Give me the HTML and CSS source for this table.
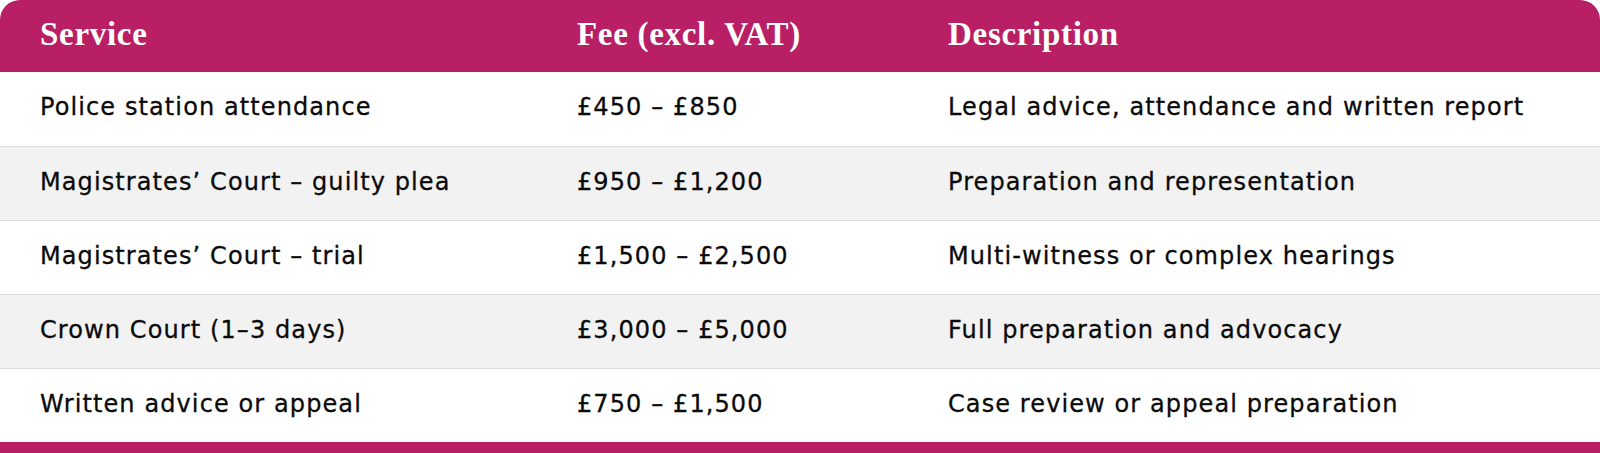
FILE: index.html
```html
<!DOCTYPE html>
<html lang="en">
<head>
<meta charset="utf-8">
<title>Fees</title>
<link rel="stylesheet" href="styles.css">
</head>
<body>
<div class="fees">
  <table class="fee-table">
    <colgroup>
      <col class="col-service">
      <col class="col-fee">
      <col class="col-desc">
    </colgroup>
    <thead>
      <tr>
        <th>Service</th>
        <th>Fee (excl. VAT)</th>
        <th>Description</th>
      </tr>
    </thead>
    <tbody>
      <tr>
        <td>Police station attendance</td>
        <td>£450 – £850</td>
        <td>Legal advice, attendance and written report</td>
      </tr>
      <tr>
        <td>Magistrates’ Court – guilty plea</td>
        <td>£950 – £1,200</td>
        <td>Preparation and representation</td>
      </tr>
      <tr>
        <td>Magistrates’ Court – trial</td>
        <td>£1,500 – £2,500</td>
        <td>Multi-witness or complex hearings</td>
      </tr>
      <tr>
        <td>Crown Court (1–3 days)</td>
        <td>£3,000 – £5,000</td>
        <td>Full preparation and advocacy</td>
      </tr>
      <tr>
        <td>Written advice or appeal</td>
        <td>£750 – £1,500</td>
        <td>Case review or appeal preparation</td>
      </tr>
    </tbody>
  </table>
  <div class="fees-foot"></div>
</div>
</body>
</html>
```

FILE: styles.css
```css
html, body {
  margin: 0;
  padding: 0;
  background: #ffffff;
}

.fees {
  width: 1600px;
  border-radius: 20px 20px 0 0;
  overflow: hidden;
}

.fee-table {
  width: 100%;
  border-collapse: collapse;
  table-layout: fixed;
  font-family: "DejaVu Sans", "Open Sans", sans-serif;
}

.col-service { width: 537px; }
.col-fee { width: 371px; }
.col-desc { width: 692px; }

.fee-table thead tr {
  background: #b81f65;
}

.fee-table th {
  height: 72px;
  padding: 0 0 4px 40px;
  box-sizing: border-box;
  text-align: left;
  color: #ffffff;
  font-family: "Liberation Serif", "DejaVu Serif", serif;
  font-weight: 700;
  font-size: 33px;
  letter-spacing: 0.7px;
  vertical-align: middle;
  white-space: nowrap;
}

.fee-table td {
  height: 74px;
  padding: 0 0 3px 40px;
  box-sizing: border-box;
  font-size: 24px;
  font-weight: 400;
  letter-spacing: 1.1px;
  color: #0a0a0a;
  -webkit-text-stroke: 0.3px #0a0a0a;
  vertical-align: middle;
  border-top: 1px solid #dcdcdc;
  white-space: nowrap;
}

.fee-table tbody tr:first-child td {
  border-top: none;
}

.fee-table tbody tr:nth-child(even) {
  background: #f2f2f2;
}

.fees-foot {
  height: 11px;
  background: #b81f65;
}
```
